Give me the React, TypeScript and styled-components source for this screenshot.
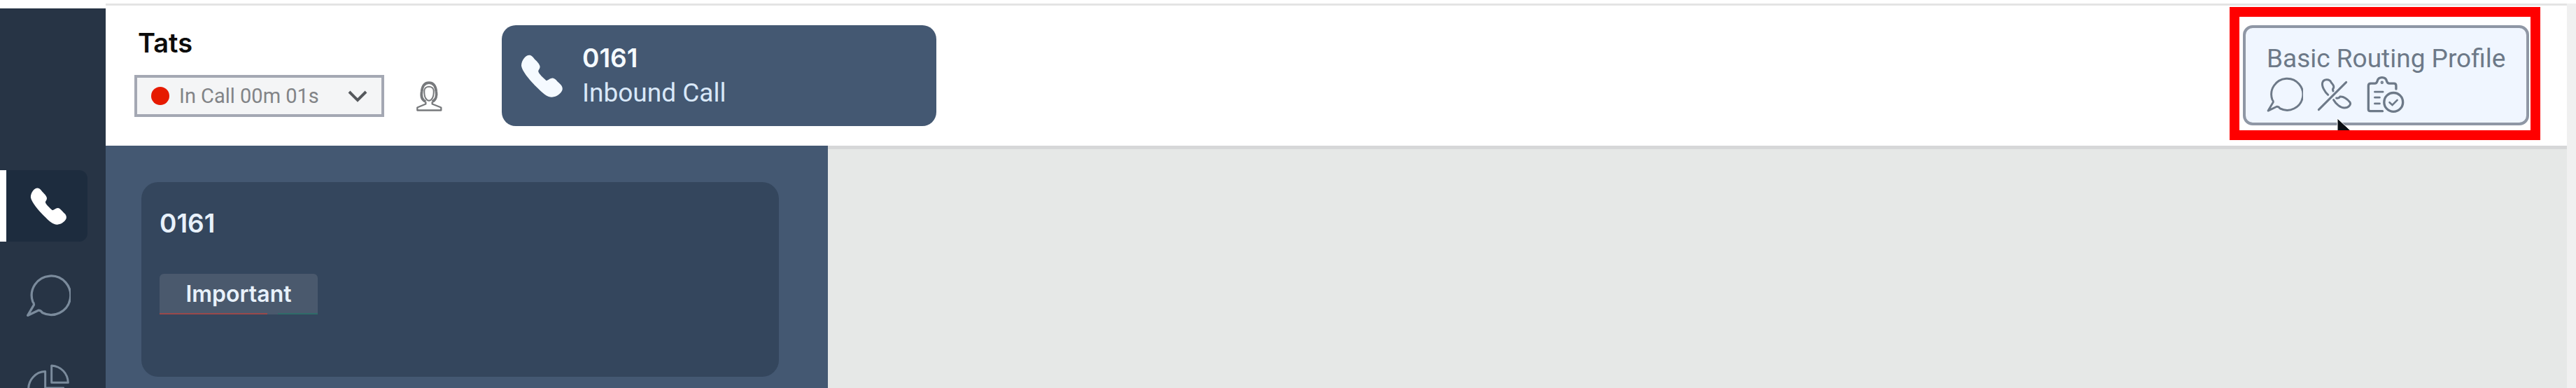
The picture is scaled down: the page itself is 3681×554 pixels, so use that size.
import React from 'react';
import styled, { createGlobalStyle } from 'styled-components';

const GlobalStyle = createGlobalStyle`
  *, *::before, *::after { box-sizing: border-box; }
  body { margin: 0; background: #fff; font-family: Inter, 'Liberation Sans', sans-serif; }
  button, select { font: inherit; color: inherit; }
  svg { display: block; flex: none; }
`;

const Page = styled.div`
  display: flex;
  height: 100vh;
  overflow: hidden;
`;

const Sidebar = styled.nav`
  display: flex;
  flex-direction: column;
  gap: 26px;
  flex: none;
  width: 151px;
  margin-top: 12px;
  padding-top: 231px;
  background: #273445;
  overflow: hidden;
`;

const NavButton = styled.button<{ $active?: boolean }>`
  display: flex;
  flex: none;
  align-items: center;
  width: 125px;
  height: 102px;
  padding: 0 0 0 ${(p) => (p.$active ? 28 : 37)}px;
  border: 0;
  border-left: ${(p) => (p.$active ? '9px solid #fff' : '0')};
  border-radius: 0 12px 12px 0;
  background: ${(p) => (p.$active ? '#1d2c3e' : 'transparent')};
  color: ${(p) => (p.$active ? '#fff' : '#7b8b9c')};
`;

const NavIcon = styled.span`
  display: grid;
  place-items: center;
  width: 64px;
  height: 64px;
`;

const Main = styled.div`
  display: flex;
  flex-direction: column;
  flex: 1;
  min-width: 0;
  margin-top: 5px;
  border-right: 13px solid #f0f0f0;
`;

const Header = styled.header`
  display: flex;
  align-items: flex-start;
  flex: none;
  height: 203px;
  padding: 0 38px 0 41px;
  border-top: 3px solid #e4e4e4;
  background: #fff;
`;

const Agent = styled.div`
  display: flex;
  flex-direction: column;
  gap: 24px;
  margin: 31px 85px 0 0;
`;

const AgentName = styled.h1`
  margin: 0;
  padding-left: 5px;
  font-size: 38px;
  font-weight: 600;
  line-height: 44px;
  color: #0c0c0c;
`;

const AgentControls = styled.div`
  display: flex;
  align-items: center;
  gap: 45px;
`;

const StatusField = styled.label`
  display: flex;
  align-items: center;
  width: 357px;
  height: 60px;
  padding: 0 20px;
  border: 4px solid #a4a8b3;
  background: #f4f5f6;
  color: #828487;
`;

const StatusDot = styled.span`
  flex: none;
  width: 26px;
  height: 26px;
  margin-right: 14px;
  border-radius: 50%;
  background: #e61a00;
`;

const StatusSelect = styled.select`
  flex: 1;
  min-width: 0;
  height: 44px;
  padding: 0;
  border: 0;
  appearance: none;
  background: transparent;
  font-family: Roboto, 'Liberation Sans', sans-serif;
  font-size: 29px;
`;

const PlainButton = styled.button`
  padding: 0;
  border: 0;
  background: transparent;
  color: #77797c;
`;

const CallTab = styled.button`
  display: flex;
  align-items: center;
  gap: 27px;
  width: 621px;
  height: 144px;
  margin: 28px 0 0;
  padding: 0 27px;
  border: 0;
  border-radius: 20px;
  background: #445872;
  color: #f5faff;
  text-align: left;
`;

const CallText = styled.span`
  display: flex;
  flex-direction: column;
`;

const CallNumber = styled.strong`
  font-size: 37px;
  font-weight: 600;
  line-height: 50px;
`;

const CallKind = styled.span`
  font-family: Roboto, 'Liberation Sans', sans-serif;
  font-size: 37px;
  line-height: 50px;
  color: #d9e8f9;
`;

const Callout = styled.div`
  position: relative;
  margin: 2px 0 0 auto;
  padding: 12px 2px 7px 5px;
  border: 14px solid #f00;
  overflow: hidden;
`;

const RoutingCard = styled.section`
  width: 409px;
  height: 143px;
  padding: 21px 0 0 30px;
  border: 4px solid #8f97a5;
  border-radius: 14px;
  background: #f0f6ff;
  color: #6d7988;
  white-space: nowrap;
`;

const RoutingTitle = styled.h2`
  margin: 0;
  font-family: Roboto, 'Liberation Sans', sans-serif;
  font-size: 37px;
  font-weight: 400;
  line-height: 46px;
`;

const ChannelRow = styled.div`
  display: flex;
  align-items: center;
  gap: 20px;
`;

const Pointer = styled.svg`
  position: absolute;
  left: 138px;
  top: 141px;
`;

const Workspace = styled.div`
  display: flex;
  flex: 1;
  min-height: 0;
`;

const ContactPanel = styled.aside`
  flex: none;
  width: 1032px;
  padding: 52px 70px 0 51px;
  background: #445872;
`;

const ContactCard = styled.article`
  display: flex;
  flex-direction: column;
  align-items: flex-start;
  gap: 50px;
  height: 278px;
  padding: 37px 26px;
  border-radius: 24px;
  background: #34465d;
`;

const ContactNumber = styled.h2`
  margin: 0;
  font-size: 37px;
  font-weight: 600;
  line-height: 44px;
  color: #e8f1fb;
`;

const Tag = styled.span`
  width: 226px;
  padding-top: 2px;
  border-radius: 6px 6px 0 0;
  background: #4a596d;
  font-size: 32px;
  font-weight: 600;
  line-height: 54px;
  text-align: center;
  color: #e8f1fb;

  &::after {
    content: '';
    display: block;
    height: 2px;
    background: linear-gradient(90deg, #99494a 68%, #4a596d 68% 75%, #2f6c69 75%);
  }
`;

const Content = styled.main`
  flex: 1;
  border-top: 5px solid #d6d7d8;
  background: #e6e8e7;
`;

function PhoneIcon({ size }: { size: number }) {
  return (
    <svg width={size} height={size} viewBox="45 48 184 184" fill="currentColor" aria-hidden="true">
      <path d="M82 50C92 50 98 58 104 66C112 75 126 86 128 98C129 110 122 112 121 120C122 130 142 148 156 160C166 158 172 148 184 149C194 151 202 162 212 172C222 180 228 190 224 202C218 216 200 230 180 231C158 231 140 214 112 186C84 158 52 120 48 96C48 72 66 50 82 50Z" />
    </svg>
  );
}

function ChatIcon({ size, stroke }: { size: number; stroke: number }) {
  return (
    <svg width={size} height={size} viewBox="110 55 196 196" fill="none" stroke="currentColor" strokeWidth={stroke} strokeLinejoin="round" aria-hidden="true">
      <path d="M118 240L145 194Q146 186 140 180A85 85 0 1 1 182 228Q174 216 164 218Z" />
    </svg>
  );
}

function PieIcon() {
  return (
    <svg width="62" height="62" viewBox="112 444 186 186" fill="none" stroke="currentColor" strokeWidth="9" strokeLinejoin="round" aria-hidden="true">
      <path d="M219 453C260 456 288 486 290 526H219Z" />
      <path d="M192 478A75 75 0 1 0 270 549H192Z" />
    </svg>
  );
}

function PersonIcon() {
  return (
    <svg width="38" height="45" viewBox="75 50 114 134" fill="none" stroke="currentColor" aria-hidden="true">
      <path d="M118 140C100 132 98 112 101 96C104 70 116 59 132 59C148 59 160 70 163 96C166 112 163 132 146 140" strokeWidth="11" />
      <path d="M112 92C114 70 150 70 152 92C156 150 108 150 112 92Z" strokeWidth="6" />
      <path d="M118 140V150L82 165V177H184V165L146 150V140" strokeWidth="7" strokeLinejoin="round" />
    </svg>
  );
}

function ChevronIcon() {
  return (
    <svg width="28" height="18" viewBox="0 0 28 18" fill="none" stroke="#55585c" strokeWidth="4" aria-hidden="true">
      <path d="M2 3L14 15L26 3" />
    </svg>
  );
}

function PhoneOffIcon() {
  return (
    <svg width="50" height="50" viewBox="255 52 150 150" fill="none" stroke="currentColor" strokeWidth="9" strokeLinecap="round" aria-hidden="true">
      <path d="M302 128C288 116 274 92 278 76C282 60 308 58 315 74C319 82 329 86 326 98Q320 104 324 112" />
      <path d="M326 150C336 168 356 184 372 184C390 184 402 170 396 160C386 148 372 134 354 136Q348 144 338 142" />
      <path d="M262 192L380 74" />
    </svg>
  );
}

function ClipboardIcon() {
  return (
    <svg width="55" height="55" viewBox="468 38 164 164" fill="none" stroke="currentColor" strokeWidth="10" strokeLinecap="round" aria-hidden="true">
      <path d="M538 192H486Q478 192 478 184V84Q478 74 488 74H506C512 74 514 70 516 64C521 44 551 44 556 64C558 70 560 74 567 74H587Q596 74 596 84V98" />
      <path d="M505 110H540M505 134H526M505 160H526" strokeWidth="8" />
      <circle cx="536" cy="70" r="4" strokeWidth="5" />
      <circle cx="585" cy="154" r="40" />
      <path d="M568 155L580 166L601 145" strokeWidth="8" />
    </svg>
  );
}

export default function App() {
  return (
    <>
      <GlobalStyle />
      <Page>
        <Sidebar aria-label="Main">
          <NavButton $active aria-label="Calls">
            <NavIcon>
              <PhoneIcon size={53} />
            </NavIcon>
          </NavButton>
          <NavButton aria-label="Chats">
            <NavIcon>
              <ChatIcon size={64} stroke={10} />
            </NavIcon>
          </NavButton>
          <NavButton aria-label="Reports">
            <NavIcon>
              <PieIcon />
            </NavIcon>
          </NavButton>
        </Sidebar>
        <Main>
          <Header>
            <Agent>
              <AgentName>Tats</AgentName>
              <AgentControls>
                <StatusField>
                  <StatusDot />
                  <StatusSelect aria-label="Agent status" defaultValue="call">
                    <option value="call">In Call 00m 01s</option>
                  </StatusSelect>
                  <ChevronIcon />
                </StatusField>
                <PlainButton aria-label="Agent profile">
                  <PersonIcon />
                </PlainButton>
              </AgentControls>
            </Agent>
            <CallTab>
              <PhoneIcon size={61} />
              <CallText>
                <CallNumber>0161</CallNumber>
                <CallKind>Inbound Call</CallKind>
              </CallText>
            </CallTab>
            <Callout>
              <RoutingCard>
                <RoutingTitle>Basic Routing Profile</RoutingTitle>
                <ChannelRow>
                  <ChatIcon size={52} stroke={11} />
                  <PhoneOffIcon />
                  <ClipboardIcon />
                </ChannelRow>
              </RoutingCard>
              <Pointer width="34" height="48" viewBox="0 0 34 48" aria-hidden="true">
                <path d="M2 4V40L11 32L17 46L24 43L18 29H29Z" fill="#0b0f14" stroke="#fff" strokeWidth="1" />
              </Pointer>
            </Callout>
          </Header>
          <Workspace>
            <ContactPanel>
              <ContactCard>
                <ContactNumber>0161</ContactNumber>
                <Tag>Important</Tag>
              </ContactCard>
            </ContactPanel>
            <Content />
          </Workspace>
        </Main>
      </Page>
    </>
  );
}
